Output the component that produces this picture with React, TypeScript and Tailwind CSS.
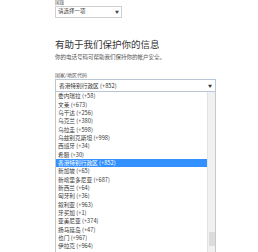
const codes = [
  '委内瑞拉 (+58)',
  '文莱 (+673)',
  '乌干达 (+256)',
  '乌克兰 (+380)',
  '乌拉圭 (+598)',
  '乌兹别克斯坦 (+998)',
  '西班牙 (+34)',
  '希腊 (+30)',
  '香港特别行政区 (+852)',
  '新加坡 (+65)',
  '新喀里多尼亚 (+687)',
  '新西兰 (+64)',
  '匈牙利 (+36)',
  '叙利亚 (+963)',
  '牙买加 (+1)',
  '亚美尼亚 (+374)',
  '扬马延岛 (+47)',
  '也门 (+967)',
  '伊拉克 (+964)',
]

const selected = '香港特别行政区 (+852)'

export default function App() {
  return (
    <div
      className="w-[258px] h-[252px] overflow-hidden bg-white pl-[55px] text-[#333]"
      style={{ fontFamily: '"Noto Sans CJK SC", "Noto Sans", sans-serif' }}
    >
      {/* Nationality */}
      <div className="h-[6px] text-[4.5px] leading-[5px] text-[#555]">国籍</div>
      <div className="w-[67px] h-[12px] border border-[#cfcfcf] flex items-center justify-between px-[2px] text-[5.5px] leading-none text-[#444]">
        <span>请选择一项</span>
        <span className="text-[4px]">▼</span>
      </div>

      {/* Heading */}
      <div className="mt-[20px] text-[9.5px] leading-[12px] text-[#333]">有助于我们保护你的信息</div>
      <div className="mt-[4px] text-[5.5px] leading-[7px] text-[#555]">你的电话号码可帮助我们保持你的帐户安全。</div>

      {/* Country code */}
      <div className="mt-[10px] text-[5px] leading-[7px] text-[#555]">国家/地区代码</div>
      <div className="mt-[1px] w-[161px] h-[13px] border border-[#b9c6d6] flex items-center justify-between px-[3px] text-[5.7px] leading-none text-[#333]">
        <span>香港特别行政区 (+852)</span>
        <span className="text-[4px]">▼</span>
      </div>
      <div className="w-[161px] h-[170px] flex border-l border-r border-[#c8c8c8]">
        <div className="flex-1 flex flex-col">
          {codes.map((c) => (
            <div
              key={c}
              className={`h-[8.33px] shrink-0 flex items-center pl-[2px] text-[5.7px] leading-none ${
                c === selected ? 'bg-[#3391ff] text-white' : 'text-[#3a3a3a]'
              }`}
            >
              {c}
            </div>
          ))}
        </div>
        <div className="w-[8px] bg-[#f1f1f1] border-l border-[#e2e2e2] flex flex-col pt-[140px] items-center">
          <div className="w-[6px] h-[14px] bg-[#dcdcdc] rounded-[1px]" />
        </div>
      </div>
    </div>
  )
}
